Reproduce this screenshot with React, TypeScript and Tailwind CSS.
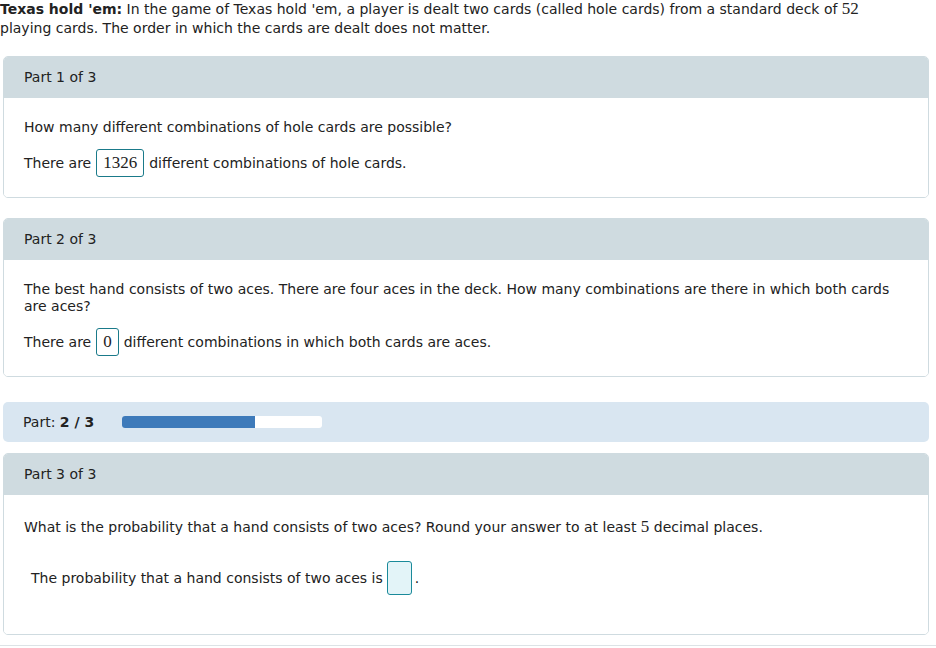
const sans = "font-['Verdana','DejaVu_Sans',sans-serif]";
const num = "font-['Liberation_Serif',serif] text-[17px]";

function PartCard({ title, children }: { title: string; children: React.ReactNode }) {
  return (
    <div className="rounded-[5px] border border-[#cfdbe0] overflow-hidden">
      <div className="h-[41px] bg-[#cfdbe0] flex items-center px-5">{title}</div>
      <div className="px-5 bg-white">{children}</div>
    </div>
  );
}

function AnswerBox({ value }: { value: string }) {
  return (
    <span className={`inline-flex items-center justify-center h-[28px] px-[6px] mx-[5px] border border-[#1a7a8a] rounded-[3px] align-middle ${num}`}>
      {value}
    </span>
  );
}

export default function App() {
  return (
    <div className={`${sans} text-[14px] text-[#222] bg-white w-[936px] h-[648px] overflow-hidden`}>
      <p className="leading-[19px] pr-[50px] -mt-px">
        <b>Texas hold 'em:</b> In the game of Texas hold 'em, a player is dealt two cards (called hole cards) from a standard deck of <span className={num}>52</span> playing cards. The order in which the cards are dealt does not matter.
      </p>

      <div className="ml-[3px] w-[926px] mt-[18px] flex flex-col">
        <PartCard title="Part 1 of 3">
          <p className="pt-[21px] leading-[17px]">How many different combinations of hole cards are possible?</p>
          <div className="flex items-center mt-[13px] pb-[20px]">
            <span>There are</span>
            <AnswerBox value="1326" />
            <span>different combinations of hole cards.</span>
          </div>
        </PartCard>

        <div className="mt-[20px]">
          <PartCard title="Part 2 of 3">
            <p className="pt-[21px] leading-[17px]">
              The best hand consists of two aces. There are four aces in the deck. How many combinations are there in which both cards are aces?
            </p>
            <div className="flex items-center mt-[13px] pb-[20px]">
              <span>There are</span>
              <AnswerBox value="0" />
              <span>different combinations in which both cards are aces.</span>
            </div>
          </PartCard>
        </div>

        <div className="mt-[25px] h-[40px] rounded-[5px] bg-[#d9e6f1] flex items-center px-5">
          <span className="w-[99px] shrink-0">
            Part: <b>2 / 3</b>
          </span>
          <div className="w-[200px] h-[12px] rounded-[3px] bg-white overflow-hidden">
            <div className="h-full w-[133px] bg-[#3d7aba]" />
          </div>
        </div>

        <div className="mt-[11px]">
          <PartCard title="Part 3 of 3">
            <p className="pt-[23px] leading-[17px]">
              What is the probability that a hand consists of two aces? Round your answer to at least <span className={num}>5</span> decimal places.
            </p>
            <div className="flex items-center mt-[25px] pb-[39px] pl-[7px]">
              <span>The probability that a hand consists of two aces is</span>
              <span className="inline-block w-[25px] h-[34px] ml-[4px] mr-[3px] border border-[#1a8a9a] rounded-[3px] bg-[#e3f4f8]" />
              <span>.</span>
            </div>
          </PartCard>
        </div>
      </div>
      <div className="mt-[10px] h-px bg-[#dde3e6]" />
    </div>
  );
}
